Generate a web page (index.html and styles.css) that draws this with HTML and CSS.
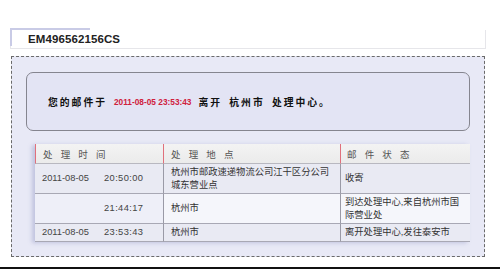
FILE: index.html
```html
<!DOCTYPE html>
<html lang="zh-CN">
<head>
<meta charset="utf-8">
<title>EM496562156CS</title>
<link rel="stylesheet" href="styles.css">
</head>
<body>
<div class="page">
  <div class="tab">
    <div class="tab-title">EM496562156CS</div>
  </div>
  <div class="panel">
    <div class="notice">
      <span class="lead">您的邮件于</span>
      <span class="stamp">2011-08-05 23:53:43</span>
      <span class="lead wide">离开 杭州市 处理中心。</span>
    </div>
    <table class="track">
      <colgroup>
        <col class="c1">
        <col class="c2">
        <col class="c3">
      </colgroup>
      <thead>
        <tr>
          <th>处 理 时 间</th>
          <th>处 理 地 点</th>
          <th class="h3">邮 件 状 态</th>
        </tr>
      </thead>
      <tbody>
        <tr class="odd">
          <td><span class="date">2011-08-05</span><span class="time">20:50:00</span></td>
          <td class="d2">杭州市邮政速递物流公司江干区分公司城东营业点</td>
          <td class="d3">收寄</td>
        </tr>
        <tr class="even">
          <td class="d1"><span class="date"></span><span class="time">21:44:17</span></td>
          <td class="d2">杭州市</td>
          <td class="d3">到达处理中心,来自杭州市国际营业处</td>
        </tr>
        <tr class="odd">
          <td><span class="date">2011-08-05</span><span class="time">23:53:43</span></td>
          <td class="d2">杭州市</td>
          <td class="d3">离开处理中心,发往泰安市</td>
        </tr>
      </tbody>
    </table>
  </div>
</div>
<div class="rule"></div>
</body>
</html>
```
FILE: styles.css
```css
html, body {
  margin: 0;
  padding: 0;
  background: #ffffff;
  font-family: "Liberation Sans", "Noto Sans CJK SC", sans-serif;
}

*, *::before, *::after {
  box-sizing: border-box;
}

.page {
  display: flex;
  flex-direction: column;
  width: 476px;
  margin: 0 0 0 10px;
  padding-top: 30px;
  height: 257px;
}

.tab {
  position: relative;
  height: 19px;
  border: 1px solid #e6e6ea;
  border-top: 0;
  background: #ffffff;
  display: flex;
  align-items: center;
}

.tab::before {
  content: "";
  position: absolute;
  left: -1px;
  top: -2px;
  width: 80px;
  height: 2px;
  background: #c9cbe6;
}

.tab::after {
  content: "";
  position: absolute;
  left: -1px;
  top: 0;
  width: 2px;
  height: 16px;
  background: #c9cbe6;
}

.tab-title {
  padding-left: 17px;
  font-size: 11.5px;
  font-weight: bold;
  color: #222;
  letter-spacing: 0.1px;
  line-height: 18px;
}

.panel {
  margin-top: 7px;
  margin-left: 1px;
  width: 474px;
  height: 201px;
  border: 1px dashed #6a6a6a;
  background: #e8e9f6;
  display: flex;
  flex-direction: column;
  padding: 15px 14px 0 14px;
}

.notice {
  height: 59px;
  border: 1px solid #85858f;
  border-radius: 7px;
  background: #e3e4f4;
  display: flex;
  align-items: center;
  padding-left: 21px;
  gap: 7px;
}

.lead {
  font-family: "Noto Sans CJK SC", sans-serif;
  font-size: 9.8px;
  font-weight: bold;
  letter-spacing: 2px;
  color: #111;
}

.lead.wide {
  word-spacing: 3px;
}

.stamp {
  font-size: 8.3px;
  font-weight: bold;
  color: #d0203c;
}

.track {
  margin-top: 13px;
  margin-left: 9px;
  width: 435px;
  border-collapse: separate;
  border-spacing: 0;
  table-layout: fixed;
  font-size: 9.3px;
  color: #333;
  box-shadow: -3px 1px 4px rgba(120, 125, 180, 0.35);
}

.c1 { width: 128px; }
.c2 { width: 177px; }
.c3 { width: 130px; }

.track th {
  height: 20px;
  padding: 0 0 0 7px;
  text-align: left;
  font-family: "Noto Sans CJK SC", sans-serif;
  font-weight: normal;
  font-size: 9.5px;
  letter-spacing: 3px;
  color: #555;
  background: linear-gradient(#f3f3f3, #ebebeb);
  border-left: 1px solid #e0707c;
  border-bottom: 1px solid #b8b8c0;
}

.track th.h3 {
  padding-left: 6px;
}

.track td {
  padding: 2px 5px 2px 7px;
  line-height: 12.5px;
  vertical-align: middle;
  font-family: "Liberation Sans", "Noto Sans CJK SC", sans-serif;
  border-bottom: 1px solid #a8a8b4;
}

.track td.d2,
.track td.d3 {
  border-left: 1px solid #9a9aa6;
}

.track td.d3 {
  padding-left: 4px;
  padding-right: 3px;
}

.track tr.odd td {
  background: #e9eaf3;
}

.track tr.even td {
  background: #f5f6fb;
}

.track tr.even td.d1 {
  background: #eeeff8;
}

.track tbody tr:first-child td { height: 30px; }

.date {
  display: inline-block;
  width: 62px;
  color: #444;
  font-size: 9.3px;
}

.time {
  color: #444;
  font-size: 9.3px;
  letter-spacing: 0.4px;
}

.rule {
  margin-top: 10px;
  height: 2px;
  background: #111;
}
```
